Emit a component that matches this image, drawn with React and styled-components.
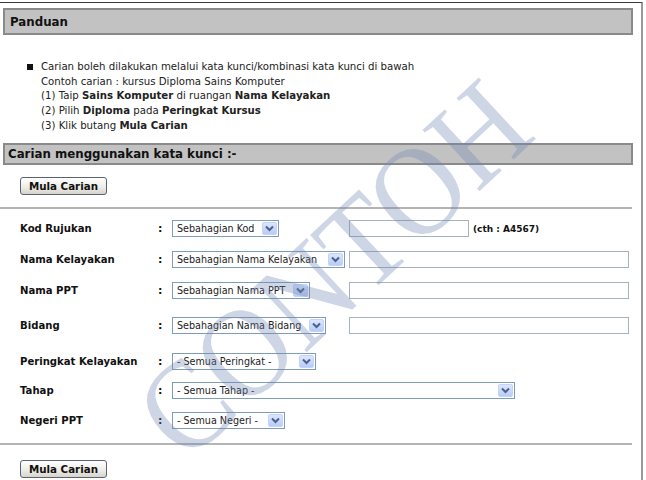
import React from "react";
import styled, { createGlobalStyle } from "styled-components";

const GlobalStyle = createGlobalStyle`
  html, body {
    margin: 0;
    padding: 0;
    background: #fff;
  }
  body {
    font-family: "DejaVu Sans", Verdana, sans-serif;
    font-size: 11px;
    color: #111;
  }
`;

const Frame = styled.div`
  position: relative;
  box-sizing: border-box;
  width: 643px;
  height: 480px;
  margin-top: 2px;
  border-top: 1px solid #3a3a3a;
  border-right: 2px solid #9a9a9a;
  padding: 5px 8px 0 3px;
  overflow: hidden;
`;

const SectionHeader = styled.div`
  box-sizing: border-box;
  height: ${(p) => p.$h}px;
  background: #c2c2c2;
  border: 2px solid #8a8a8a;
  display: flex;
  align-items: center;
  padding-left: ${(p) => p.$pad}px;
  font-weight: bold;
  font-size: 11.8px;
  color: #111;
`;

const Guide = styled.ul`
  list-style: none;
  margin: 25px 0 9px 0;
  padding: 0 0 0 24px;
  line-height: 14.7px;
  font-size: 10.2px;
  color: #222;
`;

const GuideLine = styled.li`
  display: flex;
  align-items: center;
  padding-left: 14px;
  position: relative;
`;

const Bullet = styled.span`
  position: absolute;
  left: 0;
  top: 4px;
  width: 6px;
  height: 6px;
  background: #111;
`;

const ButtonRow = styled.div`
  padding: ${(p) => p.$top}px 0 0 17px;
  height: ${(p) => p.$h}px;
  box-sizing: border-box;
`;

const Button = styled.button`
  box-sizing: border-box;
  width: 87px;
  height: 18px;
  padding: 0;
  font-family: "DejaVu Sans", Verdana, sans-serif;
  font-weight: bold;
  font-size: 10.3px;
  color: #111;
  border: 1px solid #5a6470;
  border-radius: 3px;
  background: linear-gradient(#ffffff, #ecebe6 60%, #d6d3ca);
  cursor: pointer;
`;

const Divider = styled.hr`
  margin: 0 0 0 -3px;
  border: none;
  height: 2px;
  background: #b4b4b4;
  width: 632px;
`;

const Form = styled.div`
  padding-top: 5px;
  padding-bottom: 5px;
`;

const Row = styled.div`
  display: grid;
  grid-template-columns: 138px 14px 177px 1fr;
  align-items: center;
  height: ${(p) => p.$h}px;
  padding-left: 17px;
`;

const Label = styled.span`
  font-weight: bold;
  font-size: 10.1px;
  color: #111;
`;

const Colon = styled.span`
  font-weight: bold;
  font-size: 11px;
`;

const Dropdown = styled.div`
  box-sizing: border-box;
  width: ${(p) => p.$w}px;
  height: 17px;
  border: 1px solid #7f9db9;
  display: flex;
  align-items: center;
  justify-content: space-between;
  padding: 0 1px 0 4px;
  font-size: 9.6px;
  color: #222;
  background: #fff;
  white-space: nowrap;
  overflow: hidden;
`;

const ArrowBox = styled.span`
  box-sizing: border-box;
  width: 15px;
  height: 13px;
  flex: none;
  display: flex;
  align-items: center;
  justify-content: center;
  border: 1px solid #c3d3fd;
  border-radius: 2px;
  background: linear-gradient(#dbe6ff, #b9cbf6);
`;

const Fields = styled.div`
  display: flex;
  align-items: center;
  gap: 4px;
`;

const TextInput = styled.input`
  box-sizing: border-box;
  width: ${(p) => p.$w}px;
  height: 17px;
  border: 1px solid #a5b3bd;
  margin: 0;
  padding: 0 3px;
  font-size: 11px;
`;

const Note = styled.span`
  font-weight: bold;
  font-size: 9px;
  color: #111;
`;

const Watermark = styled.div`
  position: absolute;
  left: 333px;
  top: 266px;
  transform: translate(-50%, -50%) rotate(-43deg) scale(1, 1.1);
  font-family: "Liberation Serif", "Times New Roman", serif;
  font-size: 116px;
  color: rgba(110, 132, 180, 0.34);
  pointer-events: none;
  white-space: nowrap;
  line-height: 1;
`;

const Chevron = () => (
  <svg width="9" height="7" viewBox="0 0 9 7">
    <path d="M1 1.5 L4.5 5 L8 1.5" fill="none" stroke="#4d6185" strokeWidth="2" />
  </svg>
);

const Select = ({ w, children }) => (
  <Dropdown $w={w}>
    <span>{children}</span>
    <ArrowBox>
      <Chevron />
    </ArrowBox>
  </Dropdown>
);

const rows = [
  { label: "Kod Rujukan", option: "Sebahagian Kod", w: 107, h: 30, input: 120, note: "(cth : A4567)" },
  { label: "Nama Kelayakan", option: "Sebahagian Nama Kelayakan", w: 173, h: 32, input: 280 },
  { label: "Nama PPT", option: "Sebahagian Nama PPT", w: 138, h: 30, input: 280 },
  { label: "Bidang", option: "Sebahagian Nama Bidang", w: 154, h: 40, input: 280 },
  { label: "Peringkat Kelayakan", option: "- Semua Peringkat -", w: 144, h: 32 },
  { label: "Tahap", option: "- Semua Tahap -", w: 343, h: 26, wide: true },
  { label: "Negeri PPT", option: "- Semua Negeri -", w: 113, h: 34 },
];

export default function App() {
  return (
    <>
      <GlobalStyle />
      <Frame>
        <SectionHeader $h={27} $pad={5}>Panduan</SectionHeader>
        <Guide>
          <GuideLine>
            <Bullet />
            Carian boleh dilakukan melalui kata kunci/kombinasi kata kunci di bawah
          </GuideLine>
          <GuideLine>Contoh carian : kursus Diploma Sains Komputer</GuideLine>
          <GuideLine>
            <span>
              (1) Taip <b>Sains Komputer</b> di ruangan <b>Nama Kelayakan</b>
            </span>
          </GuideLine>
          <GuideLine>
            <span>
              (2) Pilih <b>Diploma</b> pada <b>Peringkat Kursus</b>
            </span>
          </GuideLine>
          <GuideLine>
            <span>
              (3) Klik butang <b>Mula Carian</b>
            </span>
          </GuideLine>
        </Guide>
        <SectionHeader $h={22} $pad={3}>Carian menggunakan kata kunci :-</SectionHeader>
        <ButtonRow $top={12} $h={42}>
          <Button>Mula Carian</Button>
        </ButtonRow>
        <Divider />
        <Form>
          {rows.map((r) => (
            <Row key={r.label} $h={r.h}>
              <Label>{r.label}</Label>
              <Colon>:</Colon>
              {r.wide ? (
                <div style={{ gridColumn: "3 / 5" }}>
                  <Select w={r.w}>{r.option}</Select>
                </div>
              ) : (
                <Select w={r.w}>{r.option}</Select>
              )}
              {r.input ? (
                <Fields>
                  <TextInput $w={r.input} />
                  {r.note && <Note>{r.note}</Note>}
                </Fields>
              ) : (
                !r.wide && <span />
              )}
            </Row>
          ))}
        </Form>
        <Divider />
        <ButtonRow $top={15} $h={40}>
          <Button>Mula Carian</Button>
        </ButtonRow>
        <Watermark>CONTOH</Watermark>
      </Frame>
    </>
  );
}
